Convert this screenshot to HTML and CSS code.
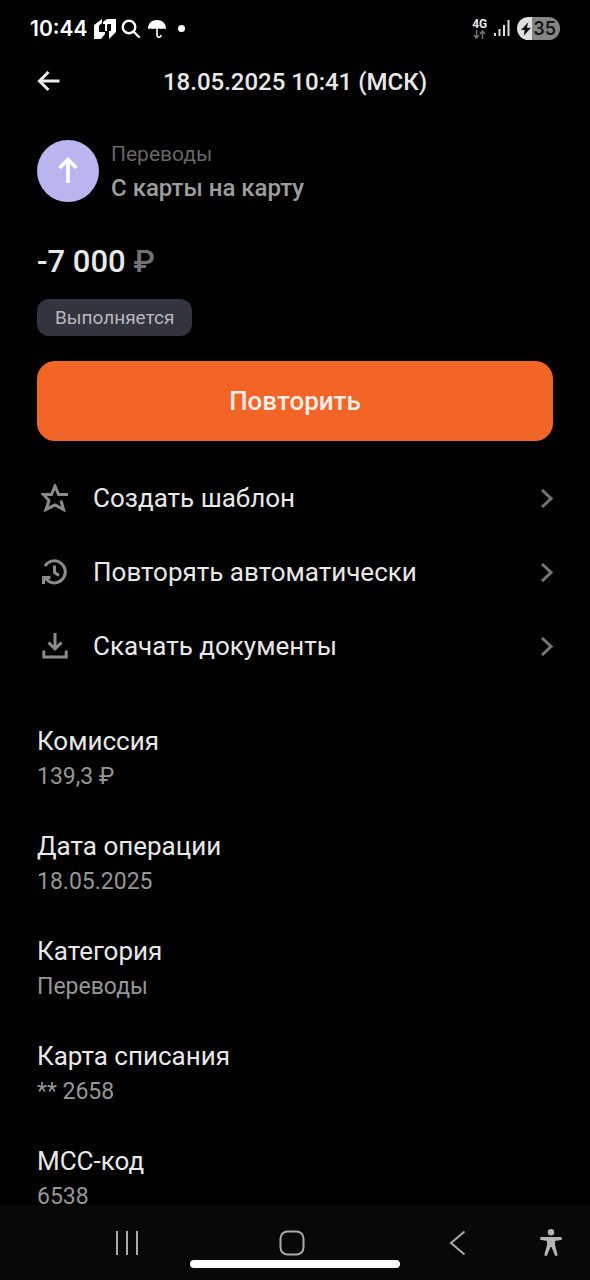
FILE: index.html
```html
<!DOCTYPE html>
<html lang="ru">
<head>
  <meta charset="utf-8">
  <meta name="viewport" content="width=device-width, initial-scale=1">
  <title>Детали операции</title>
  <link rel="stylesheet" href="styles.css">
</head>
<body>
  <div class="status">
    <div class="status-left">
      <time class="clock">10:44</time>
      <svg class="status-icon" width="22" height="22" viewBox="0 0 22 22" fill="#fff"><path d="M0 7 8 1v4L5 7.500V14h6v2l-4 5H0zM9 4l4-3h9v13l-7 7v-8h2V6h-3l-1 1v6h-2V6H9z"/></svg>
      <svg class="status-icon" width="20" height="20" viewBox="0 0 20 20" fill="none" stroke="#fff" stroke-width="2.400" stroke-linecap="round"><circle cx="8" cy="8" r="6.300"/><path d="m13 13 5 5"/></svg>
      <svg class="umbrella" width="18" height="20" viewBox="0 0 18 20" fill="none"><path fill="#fff" d="M0 10C0 4 4 1 9 1s9 3 9 9q-2.500-1-5 0-2-.8-4 0-2-.8-4 0-2.500-1-5 0z"/><path stroke="#fff" stroke-width="1.600" d="M9 8v8q0 2.200 2 2.200t2-2.200"/></svg>
      <span class="dot"></span>
    </div>
    <div class="status-right">
      <div class="network">
        <span>4G</span>
        <svg width="13" height="9" viewBox="0 0 13 9" fill="none" stroke="#777" stroke-width="1.400"><path d="M3.500 0v8M1 5l2.500 3L6 5M9.500 9V1M7 4l2.500-3L12 4"/></svg>
      </div>
      <svg class="signal" width="16" height="17" viewBox="0 0 16 17" fill="#ddd"><rect y="13" width="2" height="3"/><rect x="4.500" y="9" width="2" height="7"/><rect x="9" y="5" width="2" height="11"/><rect x="13.500" y="0" width="2" height="16"/></svg>
      <div class="battery">
        <svg width="10" height="14" viewBox="0 0 11 15" fill="#111"><path d="M8 0 0 8.500h4L3 15l8-9H6.500z"/></svg>
        <span>35</span>
      </div>
    </div>
  </div>

  <header class="topbar">
    <button class="back" type="button" aria-label="Назад">
      <svg width="24" height="22" viewBox="0 0 24 22" fill="none" stroke="#eee" stroke-width="3"><path d="M22.500 10H3M11.500 1 2.500 10l9 9"/></svg>
    </button>
    <h1 class="title">18.05.2025 10:41 (МСК)</h1>
  </header>

  <main class="content">
    <section class="operation">
      <span class="avatar">
        <svg width="20" height="28" viewBox="0 0 20 28" fill="none" stroke="#fff" stroke-width="3.600"><path d="M10 26V2.500M1.500 11 10 2.500l8.500 8.500"/></svg>
      </span>
      <div>
        <p class="operation-kind">Переводы</p>
        <p class="operation-name">С карты на карту</p>
      </div>
    </section>
    <p class="amount">-7 000 <span class="currency">₽</span></p>
    <span class="badge">Выполняется</span>
    <button class="repeat" type="button">Повторить</button>

    <div class="actions">
      <button class="action" type="button">
        <svg class="action-icon" width="28" height="28" viewBox="0 0 28 28" fill="none" stroke="#8c8c8c" stroke-width="3"><path d="M27 10.500h-9.500L14 2l-3.500 8.500H2.500l5.500 6-3 9L14 21l8.500 4.500-2.500-9"/></svg>
        <span class="action-label">Создать шаблон</span>
        <svg width="13" height="19" viewBox="0 0 13 19" fill="none" stroke="#737373" stroke-width="3"><path d="m2 1 9 8.500L2 18"/></svg>
      </button>
      <button class="action" type="button">
        <svg class="action-icon" width="28" height="28" viewBox="0 0 28 28" fill="none" stroke="#8c8c8c" stroke-width="3"><path d="M4 8A11 11 0 1 1 8 23.500L3 19.500M2.500 26v-6.500h7M13.500 7.500v7l4.500 3"/></svg>
        <span class="action-label">Повторять автоматически</span>
        <svg width="13" height="19" viewBox="0 0 13 19" fill="none" stroke="#737373" stroke-width="3"><path d="m2 1 9 8.500L2 18"/></svg>
      </button>
      <button class="action" type="button">
        <svg class="action-icon" width="28" height="28" viewBox="0 0 28 28" fill="none" stroke="#8c8c8c" stroke-width="3"><path d="M14 1v16M7.500 10.500l6.500 6.500 6.500-6.500M2.800 18.500v6.500h22.400v-6.500"/></svg>
        <span class="action-label">Скачать документы</span>
        <svg width="13" height="19" viewBox="0 0 13 19" fill="none" stroke="#737373" stroke-width="3"><path d="m2 1 9 8.500L2 18"/></svg>
      </button>
    </div>

    <dl class="details">
      <div class="detail"><dt>Комиссия</dt><dd>139,3 ₽</dd></div>
      <div class="detail"><dt>Дата операции</dt><dd>18.05.2025</dd></div>
      <div class="detail"><dt>Категория</dt><dd>Переводы</dd></div>
      <div class="detail"><dt>Карта списания</dt><dd>** 2658</dd></div>
      <div class="detail"><dt>МСС-код</dt><dd>6538</dd></div>
    </dl>
  </main>

  <nav class="navbar">
    <button type="button" aria-label="Последние">
      <svg width="24" height="24" viewBox="0 0 24 24" stroke="#aaa" stroke-width="2"><path d="M2 0v24M12 0v24M22 0v24"/></svg>
    </button>
    <button type="button" aria-label="Главный экран">
      <svg width="26" height="26" viewBox="0 0 26 26" fill="none" stroke="#aaa" stroke-width="2"><rect x="1.500" y="1.500" width="23" height="23" rx="7"/></svg>
    </button>
    <button type="button" aria-label="Назад">
      <svg width="17" height="26" viewBox="0 0 17 26" fill="none" stroke="#aaa" stroke-width="2"><path d="M15.500 1.500 2 13l13.500 11.500"/></svg>
    </button>
    <button type="button" aria-label="Специальные возможности">
      <svg width="22" height="27" viewBox="0 0 22 27" fill="#b4b4b4"><circle cx="11" cy="3.200" r="3.200"/><path d="M1.500 8h19a1.500 1.500 0 0 1 0 3L15 12v4l2.500 9.300a1.400 1.400 0 0 1-2.700.7L11.500 18h-1L7.200 26a1.400 1.400 0 0 1-2.700-.7L7 16v-4l-5.500-1a1.500 1.500 0 0 1 0-3z"/></svg>
    </button>
    <span class="home-indicator"></span>
  </nav>
</body>
</html>
```

FILE: styles.css
```css
* {
  box-sizing: border-box;
}

body {
  display: flex;
  flex-direction: column;
  height: 100vh;
  margin: 0;
  background: #000;
  color: #e8e8e8;
  font-family: Roboto, "Noto Sans", sans-serif;
}

button {
  padding: 0;
  border: 0;
  background: none;
  color: inherit;
  font: inherit;
  cursor: pointer;
}

svg {
  display: block;
  flex: none;
}

h1,
p,
dl,
dd {
  margin: 0;
}

.status {
  display: flex;
  flex: none;
  align-items: center;
  justify-content: space-between;
  height: 57px;
  padding: 0 30px;
}

.status-left,
.status-right {
  display: flex;
  align-items: center;
}

.clock {
  margin-right: 7px;
  color: #fff;
  font-family: Inter, sans-serif;
  font-size: 21px;
  font-weight: 600;
}

.status-icon {
  margin-right: 5px;
}

.umbrella {
  margin: 0 12px 0 2px;
}

.dot {
  width: 7px;
  height: 7px;
  border-radius: 50%;
  background: #fff;
}

.network {
  display: flex;
  flex-direction: column;
  align-items: center;
  margin-right: 7px;
  color: #e8e8e8;
  font-size: 12px;
  font-weight: 700;
  line-height: 11px;
}

.signal {
  margin-right: 7px;
}

.battery {
  display: flex;
  align-items: center;
  gap: 2px;
  height: 23px;
  padding: 0 4px;
  border-radius: 12px;
  background: linear-gradient(90deg, #e0e0e0 35%, #858585 35%);
  color: #151515;
  font-family: Inter, sans-serif;
  font-size: 18px;
  font-weight: 600;
}

.topbar {
  display: grid;
  flex: none;
  grid-template-columns: 24px 1fr 24px;
  align-items: center;
  height: 50px;
  padding: 0 37px;
}

.title {
  font-size: 24px;
  font-weight: 500;
  line-height: 32px;
  text-align: center;
}

.content {
  flex: 1;
  min-height: 0;
  padding: 30px 37px 0;
  overflow-y: auto;
  scrollbar-width: none;
}

.operation {
  display: flex;
  align-items: center;
  gap: 12px;
  color: #9e9e9e;
}

.avatar {
  display: grid;
  place-items: center;
  width: 62px;
  height: 62px;
  border-radius: 50%;
  background: #b8b5ef;
}

.operation-kind {
  color: #666;
  font-size: 21px;
  line-height: 34px;
}

.operation-name {
  font-size: 24px;
  font-weight: 500;
  line-height: 34px;
}

.amount {
  margin: 37px 0 17px;
  font-size: 31px;
  font-weight: 500;
  line-height: 40px;
}

.currency {
  color: #737373;
}

.badge {
  display: table;
  padding: 0 18px;
  border-radius: 12px;
  background: #32343e;
  color: #b8b8bc;
  font-size: 19px;
  line-height: 37px;
}

.repeat {
  display: block;
  width: 100%;
  margin: 25px 0 20px;
  border-radius: 18px;
  background: #f36427;
  color: #fbeee6;
  font-size: 26px;
  font-weight: 500;
  line-height: 80px;
}

.action {
  display: flex;
  align-items: center;
  width: 100%;
  height: 74px;
  padding-left: 4px;
  text-align: left;
}

.action-icon {
  margin-right: 24px;
}

.action-label {
  flex: 1;
  font-size: 26px;
  line-height: 32px;
}

.details {
  display: flex;
  flex-direction: column;
  gap: 40px;
  padding-top: 42px;
}

.detail {
  display: flex;
  flex-direction: column;
  gap: 7px;
  font-size: 26px;
  line-height: 32px;
}

.detail dd {
  color: #969696;
  font-size: 23px;
  line-height: 26px;
}

.navbar {
  position: relative;
  display: grid;
  flex: none;
  grid-template-columns: 1fr 1fr 1fr 22px;
  height: 75px;
  padding: 0 28px 0 44px;
  background: #080808;
}

.navbar button {
  display: grid;
  place-items: center;
}

.home-indicator {
  position: absolute;
  bottom: 12px;
  left: 50%;
  width: 210px;
  height: 8px;
  border-radius: 4px;
  background: #fff;
  transform: translateX(-50%);
}
```
